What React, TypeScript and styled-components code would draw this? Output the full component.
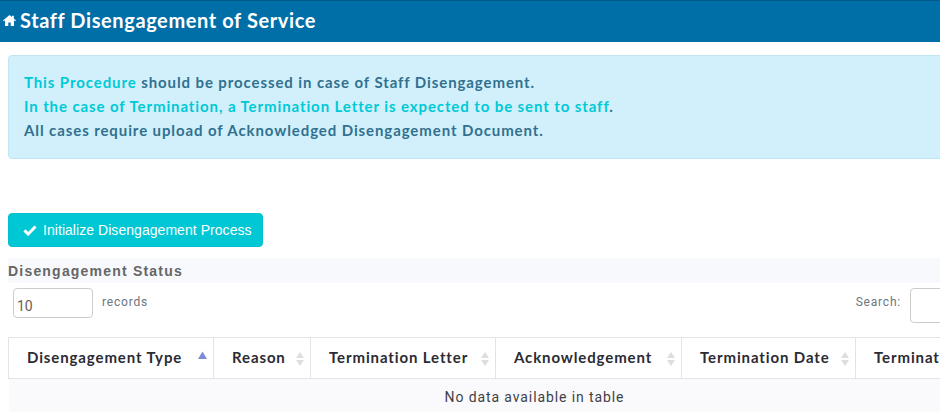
import React from 'react'
import styled, { createGlobalStyle } from 'styled-components'

const GlobalStyle = createGlobalStyle`
  html, body {
    margin: 0;
    padding: 0;
    background: #ffffff;
    overflow: hidden;
  }
`

const Page = styled.div`
  width: 940px;
  height: 412px;
  overflow: hidden;
  font-family: "Lato", "Liberation Sans", sans-serif;
`

const TitleBar = styled.div`
  display: flex;
  align-items: center;
  gap: 4px;
  height: 42px;
  padding: 0 0 3px 3px;
  box-sizing: border-box;
  background: #006fa8;
  border-top: 1px solid #045a87;
  color: #ffffff;
`

const Title = styled.h1`
  margin: 0;
  font-size: 20px;
  font-weight: 700;
  letter-spacing: 0.6px;
`

const Content = styled.div`
  width: 1052px;
  padding: 13px 0 0 8px;
`

const Notice = styled.div`
  height: 104px;
  padding: 10px 15px 12px;
  box-sizing: border-box;
  display: flex;
  flex-direction: column;
  justify-content: center;
  background: #d2f0fb;
  border: 1px solid #bfe6f2;
  border-radius: 4px;
  font-size: 15px;
  font-weight: 700;
  line-height: 24px;
  letter-spacing: 0.9px;
  color: #31708f;
`

const Accent = styled.span`
  color: #00c9d6;
`

const ActionButton = styled.button`
  display: flex;
  align-items: center;
  gap: 6px;
  height: 34px;
  margin-top: 54px;
  padding: 0 10px 0 14px;
  background: #00c7d4;
  border: 1px solid #00c0cd;
  border-radius: 4px;
  color: #ffffff;
  font-family: "Liberation Sans", Arial, sans-serif;
  font-size: 14px;
  letter-spacing: 0.05px;
`

const SectionTitle = styled.div`
  height: 25px;
  margin-top: 11px;
  display: flex;
  align-items: center;
  background: #f8f9fd;
  color: #666666;
  font-family: "Liberation Sans", Arial, sans-serif;
  font-size: 14px;
  font-weight: 700;
  letter-spacing: 1.2px;
`

const Controls = styled.div`
  display: flex;
  justify-content: space-between;
  height: 54px;
  padding: 5px 0 0 5px;
  box-sizing: border-box;
`

const ControlGroup = styled.div`
  display: flex;
  align-items: flex-start;
`

const ControlLabel = styled.span`
  font-family: "Roboto", "Liberation Sans", sans-serif;
  font-size: 12px;
  letter-spacing: 0.8px;
  line-height: 14px;
  color: #6b7680;
  margin-top: 7px;
`

const LengthBox = styled.div`
  width: 80px;
  height: 30px;
  margin-right: 9px;
  padding: 9px 0 0 3px;
  box-sizing: border-box;
  border: 1px solid #cccccc;
  border-radius: 4px;
  font-family: "Roboto", sans-serif;
  font-size: 14px;
  line-height: 16px;
  color: #6a5d55;
  background: #ffffff;
`

const SearchBox = styled.div`
  width: 148px;
  height: 33px;
  margin-left: 9px;
  border: 1px solid #cccccc;
  border-radius: 4px;
  background: #ffffff;
`

const Table = styled.table`
  border-collapse: collapse;
  table-layout: fixed;
  width: 1052px;
`

const HeadCell = styled.th<{ $width: number }>`
  position: relative;
  width: ${({ $width }) => $width}px;
  height: 41px;
  padding: 0 0 2px 18px;
  box-sizing: border-box;
  text-align: left;
  white-space: nowrap;
  border: 1px solid #e4e4e8;
  font-size: 15px;
  font-weight: 700;
  letter-spacing: 0.88px;
  color: #2b2b33;
  background: #ffffff;
`

const SortMark = styled.svg`
  position: absolute;
  right: 5px;
  top: 13px;
`

const EmptyCell = styled.td`
  height: 38px;
  padding: 9px 0 0;
  text-align: center;
  vertical-align: top;
  background: #fafafd;
  font-family: "Roboto", "Liberation Sans", sans-serif;
  font-size: 14px;
  letter-spacing: 0.9px;
  line-height: 18px;
  color: #3f3f46;
`

const HomeIcon = () => (
  <svg width="13" height="11" viewBox="0 0 13 11">
    <path fill="#ffffff" d="M6.5 0 0 5.4l.7.9 1.3-1V11h3.3V7.6h2.4V11H11V5.3l1.3 1 .7-.9-2.2-1.9V.8H9v1.3z" />
  </svg>
)

const CheckIcon = () => (
  <svg width="14" height="11" viewBox="0 0 14 11">
    <path fill="none" stroke="#ffffff" strokeWidth="3" d="M1.4 5.4 5.2 9l7.3-7.5" />
  </svg>
)

const Sort: React.FC<{ active?: boolean }> = ({ active }) => (
  <SortMark width="10" height="16" viewBox="0 0 10 16">
    {active ? (
      <path fill="#7f8bd6" d="M4.5 0.5 9 8H0z" />
    ) : (
      <>
        <path fill="#dcdee2" d="M5 1 9 7H1z" />
        <path fill="#dcdee2" d="M5 15 9 9H1z" />
      </>
    )}
  </SortMark>
)

const columns = [
  { label: 'Disengagement Type', width: 205, active: true },
  { label: 'Reason', width: 97 },
  { label: 'Termination Letter', width: 185 },
  { label: 'Acknowledgement', width: 186 },
  { label: 'Termination Date', width: 174 },
  { label: 'Termination Notice', width: 205 },
]

const App: React.FC = () => (
  <Page>
    <GlobalStyle />
    <TitleBar>
      <HomeIcon />
      <Title>Staff Disengagement of Service</Title>
    </TitleBar>
    <Content>
      <Notice>
        <div><Accent>This Procedure</Accent> should be processed in case of Staff Disengagement.</div>
        <div><Accent>In the case of Termination, a Termination Letter is expected to be sent to staff</Accent>.</div>
        <div>All cases require upload of Acknowledged Disengagement Document.</div>
      </Notice>
      <ActionButton>
        <CheckIcon />
        Initialize Disengagement Process
      </ActionButton>
      <SectionTitle>Disengagement Status</SectionTitle>
      <Controls>
        <ControlGroup>
          <LengthBox>10</LengthBox>
          <ControlLabel>records</ControlLabel>
        </ControlGroup>
        <ControlGroup>
          <ControlLabel>Search:</ControlLabel>
          <SearchBox />
        </ControlGroup>
      </Controls>
      <Table>
        <thead>
          <tr>
            {columns.map(col => (
              <HeadCell key={col.label} $width={col.width}>
                {col.label}
                <Sort active={col.active} />
              </HeadCell>
            ))}
          </tr>
        </thead>
        <tbody>
          <tr>
            <EmptyCell colSpan={6}>No data available in table</EmptyCell>
          </tr>
        </tbody>
      </Table>
    </Content>
  </Page>
)

export default App
